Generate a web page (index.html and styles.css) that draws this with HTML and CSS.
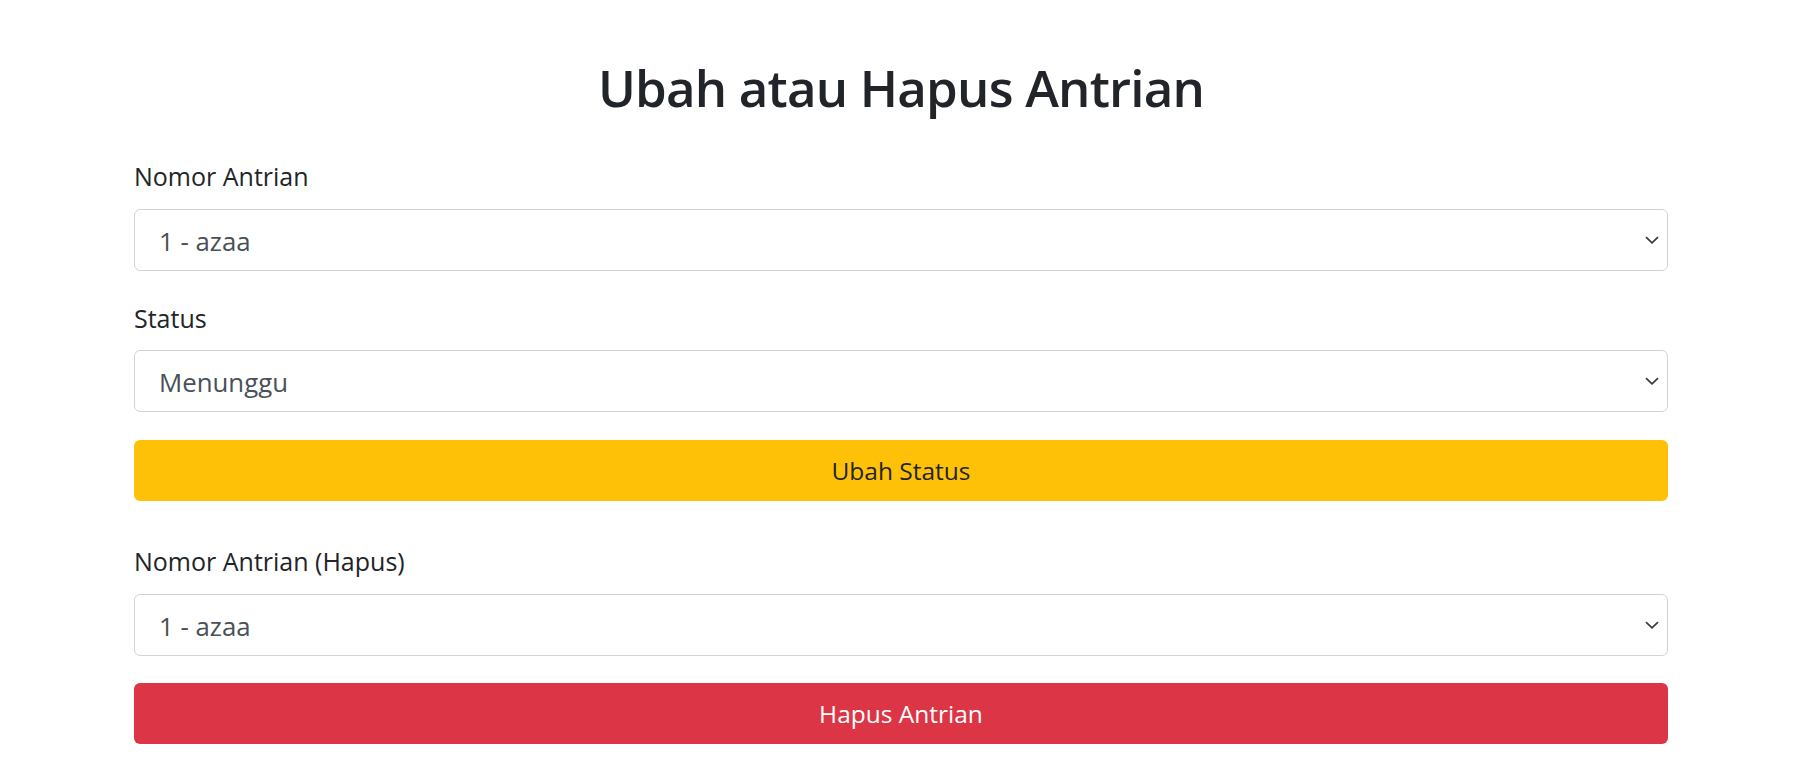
FILE: index.html
```html
<!DOCTYPE html>
<html lang="id">
<head>
<meta charset="utf-8">
<title>Ubah atau Hapus Antrian</title>
<link rel="stylesheet" href="styles.css">
</head>
<body>
<main class="page">
  <h1 class="title">Ubah atau Hapus Antrian</h1>

  <form class="form">
    <div class="field">
      <label class="label" for="nomor">Nomor Antrian</label>
      <div class="select-wrap">
        <select class="select" id="nomor">
          <option>1 - azaa</option>
        </select>
        <svg class="chevron" width="14" height="8" viewBox="0 0 14 8"><path d="M1 1.2 L7 6.8 L13 1.2" fill="none" stroke="#343a40" stroke-width="1.7"/></svg>
      </div>
    </div>
    <div class="field">
      <label class="label" for="status">Status</label>
      <div class="select-wrap">
        <select class="select" id="status">
          <option>Menunggu</option>
        </select>
        <svg class="chevron" width="14" height="8" viewBox="0 0 14 8"><path d="M1 1.2 L7 6.8 L13 1.2" fill="none" stroke="#343a40" stroke-width="1.7"/></svg>
      </div>
    </div>
    <button type="button" class="btn btn-warning">Ubah Status</button>
  </form>

  <form class="form form-delete">
    <div class="field">
      <label class="label" for="hapus">Nomor Antrian (Hapus)</label>
      <div class="select-wrap">
        <select class="select" id="hapus">
          <option>1 - azaa</option>
        </select>
        <svg class="chevron" width="14" height="8" viewBox="0 0 14 8"><path d="M1 1.2 L7 6.8 L13 1.2" fill="none" stroke="#343a40" stroke-width="1.7"/></svg>
      </div>
    </div>
    <button type="button" class="btn btn-danger">Hapus Antrian</button>
  </form>
</main>
</body>
</html>
```

FILE: styles.css
```css
html, body {
  margin: 0;
  background: #ffffff;
}

body {
  font-family: "Open Sans", "Noto Sans", sans-serif;
  color: #212529;
}

.page {
  width: 1534px;
  margin-left: 134px;
  padding-top: 55px;
}

.title {
  margin: 0 0 38px;
  font-size: 51px;
  font-weight: 600;
  line-height: 64px;
  letter-spacing: -0.8px;
  text-align: center;
  color: #212529;
}

.form {
  display: flex;
  flex-direction: column;
}

.form-delete {
  margin-top: 41px;
}

.field {
  display: flex;
  flex-direction: column;
  margin-bottom: 28px;
}

.form-delete .field {
  margin-bottom: 27px;
}

.label {
  font-size: 25px;
  line-height: 38px;
  margin-bottom: 13.5px;
}

.select-wrap {
  position: relative;
}

.select {
  display: block;
  width: 100%;
  height: 62px;
  box-sizing: border-box;
  margin: 0;
  padding: 2px 60px 0 24px;
  border: 1px solid #ced4da;
  border-radius: 6px;
  background: #ffffff;
  font-family: "Open Sans", "Noto Sans", sans-serif;
  font-size: 25.8px;
  color: #495057;
  -webkit-appearance: none;
  appearance: none;
  outline: none;
}

.chevron {
  position: absolute;
  right: 9px;
  top: 50%;
  transform: translateY(-50%);
  pointer-events: none;
}

.btn {
  display: block;
  width: 100%;
  height: 61px;
  margin: 0;
  padding: 0;
  border: 0;
  border-radius: 6px;
  font-family: "Open Sans", "Noto Sans", sans-serif;
  font-size: 24.5px;
  text-align: center;
  cursor: pointer;
}

.btn-warning {
  background: #ffc107;
  color: #212529;
}

.btn-danger {
  background: #dc3545;
  color: #ffffff;
}
```
